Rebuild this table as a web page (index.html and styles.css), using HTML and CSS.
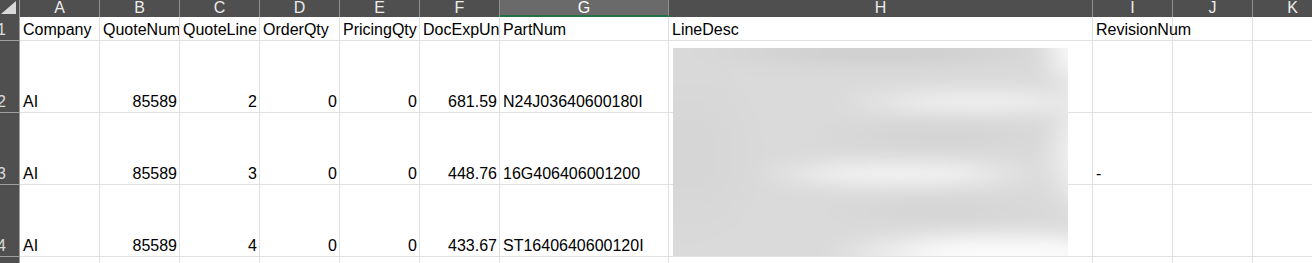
FILE: index.html
```html
<!DOCTYPE html>
<html>
<head>
<meta charset="utf-8">
<link rel="stylesheet" href="styles.css">
</head>
<body>
<div class="sheet">
  <div class="corner"><svg width="19" height="17" viewBox="0 0 19 17"><polygon points="1,14 16,14 16,1" fill="#dadada"/></svg></div>
  <div class="ch">A</div><div class="ch">B</div><div class="ch">C</div><div class="ch">D</div><div class="ch">E</div><div class="ch">F</div><div class="ch sel">G</div><div class="ch">H</div><div class="ch">I</div><div class="ch">J</div><div class="ch">K</div>

  <div class="rh"><span>1</span></div>
  <div class="c">Company</div><div class="c">QuoteNum</div><div class="c">QuoteLine</div><div class="c">OrderQty</div><div class="c">PricingQty</div><div class="c">DocExpUni</div><div class="c">PartNum</div><div class="c">LineDesc</div><div class="c spill">RevisionNum</div><div class="c"></div><div class="c"></div>

  <div class="rh"><span>2</span></div>
  <div class="c">AI</div><div class="c r">85589</div><div class="c r">2</div><div class="c r">0</div><div class="c r">0</div><div class="c r">681.59</div><div class="c">N24J03640600180I</div><div class="c"></div><div class="c"></div><div class="c"></div><div class="c"></div>

  <div class="rh"><span>3</span></div>
  <div class="c">AI</div><div class="c r">85589</div><div class="c r">3</div><div class="c r">0</div><div class="c r">0</div><div class="c r">448.76</div><div class="c">16G406406001200</div><div class="c"></div><div class="c">-</div><div class="c"></div><div class="c"></div>

  <div class="rh"><span>4</span></div>
  <div class="c">AI</div><div class="c r">85589</div><div class="c r">4</div><div class="c r">0</div><div class="c r">0</div><div class="c r">433.67</div><div class="c">ST1640640600120I</div><div class="c"></div><div class="c"></div><div class="c"></div><div class="c"></div>

  <div class="rh"><span>5</span></div>
  <div class="c"></div><div class="c"></div><div class="c"></div><div class="c"></div><div class="c"></div><div class="c"></div><div class="c"></div><div class="c"></div><div class="c"></div><div class="c"></div><div class="c"></div>

  <div class="blurimg"><div class="blurinner"></div></div>
</div>
</body>
</html>
```

FILE: styles.css
```css
html, body {
  margin: 0;
  padding: 0;
  background: #ffffff;
  overflow: hidden;
}

.sheet {
  position: relative;
  display: grid;
  grid-template-columns: 20px repeat(6, 80px) 169px 424px 80px 80px 80px;
  grid-template-rows: 17px 24px 72px 72px 72px 30px;
  font-family: "Liberation Sans", Arial, sans-serif;
  font-size: 16px;
  line-height: 18px;
  color: #000;
  width: 1333px;
}

.corner {
  background: #4f4f4f;
  border-right: 1px solid #9a9a9a;
  box-sizing: border-box;
  display: flex;
}

.ch {
  background: #4f4f4f;
  color: #ececec;
  border-right: 1px solid #8e8e8e;
  box-sizing: border-box;
  display: flex;
  justify-content: center;
  align-items: flex-start;
  line-height: 15px;
  overflow: hidden;
}

.ch.sel {
  background: #6a6a6a;
  color: #ffffff;
  border-bottom: 2px solid #217346;
}

.rh {
  background: #4f4f4f;
  color: #dcdcdc;
  border-right: 1px solid #a0a0a0;
  border-bottom: 1px solid #a0a0a0;
  box-sizing: border-box;
  display: flex;
  align-items: flex-end;
  padding-bottom: 1px;
  overflow: hidden;
}

.rh span {
  margin-left: -3px;
}

.c {
  border-right: 1px solid #e1e1e1;
  border-bottom: 1px solid #e1e1e1;
  box-sizing: border-box;
  display: flex;
  align-items: flex-end;
  padding: 0 2px 1px 3px;
  overflow: hidden;
  white-space: nowrap;
}

.c.spill {
  overflow: visible;
  position: relative;
  z-index: 1;
}

.c.r {
  justify-content: flex-end;
}

.blurimg {
  position: absolute;
  left: 673px;
  top: 48px;
  width: 395px;
  height: 208px;
  overflow: hidden;
  background: #dadada;
}

.blurinner {
  margin: -24px;
  width: calc(100% + 48px);
  height: calc(100% + 48px);
  filter: blur(9px);
  background:
    radial-gradient(ellipse 60px 60px at 443px 20px, #fdfdfd 30%, rgba(253,253,253,0) 100%),
    radial-gradient(ellipse 50px 70px at 440px 130px, #f6f6f6 20%, rgba(246,246,246,0) 100%),
    radial-gradient(ellipse 190px 26px at 360px 230px, #fcfcfc 40%, rgba(252,252,252,0) 100%),
    radial-gradient(ellipse 150px 14px at 330px 78px, #f2f2f2 40%, rgba(242,242,242,0) 100%),
    radial-gradient(ellipse 150px 15px at 250px 150px, #f4f4f4 45%, rgba(244,244,244,0) 100%),
    radial-gradient(ellipse 140px 14px at 290px 112px, #d2d2d2 30%, rgba(210,210,210,0) 100%),
    radial-gradient(ellipse 130px 13px at 290px 187px, #d3d3d3 30%, rgba(211,211,211,0) 100%),
    radial-gradient(ellipse 220px 16px at 230px 28px, #cdcdcd 30%, rgba(205,205,205,0) 100%),
    radial-gradient(ellipse 80px 100px at 40px 130px, #d6d6d6 30%, rgba(214,214,214,0) 100%),
    #dadada;
}
```
